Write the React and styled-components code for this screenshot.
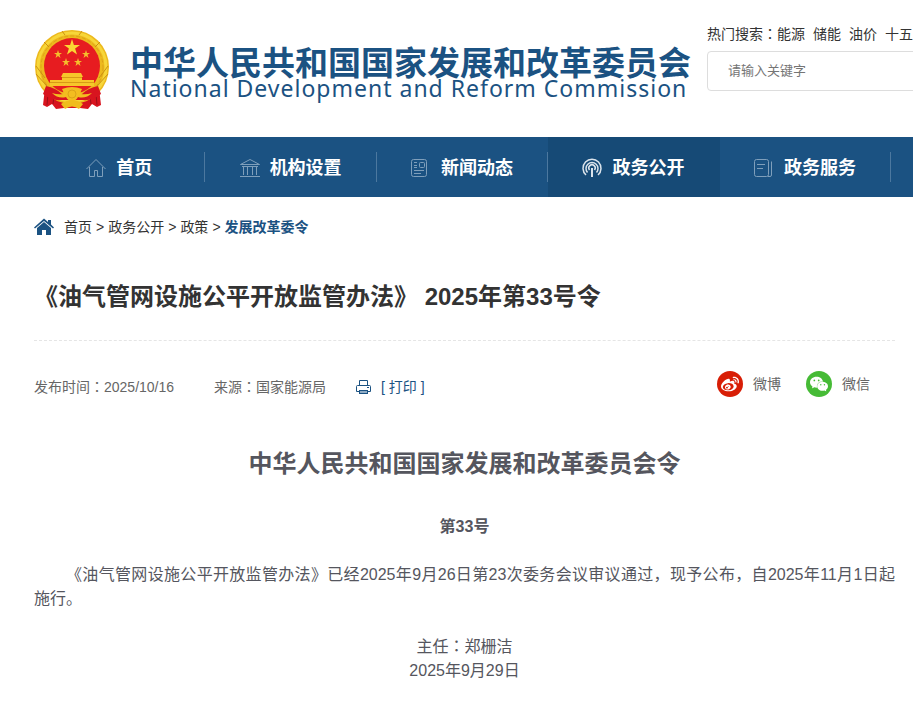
import styled, { createGlobalStyle } from "styled-components"
import { SiSinaweibo, SiWechat } from "react-icons/si";

const GlobalStyle = createGlobalStyle`
* {
    box-sizing: border-box;
}

body {
    margin: 0;
    background-color: #fff;
    color: #333;
    font-family: "Liberation Sans", "Noto Sans CJK SC", sans-serif;
    font-size: 14px;
    line-height: 20px;
    overflow-x: hidden;
}

a {
    color: inherit;
    text-decoration: none;
}

h1, h2, h3, p, ul, ol {
    margin: 0;
    padding: 0;
}

ul, ol {
    list-style: none;
}
`

const Header = styled.header`
display: flex;
align-items: flex-start;
padding: 24px 0 24px 34px;
min-height: 137px;
overflow: hidden;
`

const Brand = styled.a`
display: flex;
flex: none;
gap: 20px;
color: #1b5282;
padding-top: 4px;

svg {
    width: 76px;
    height: 84px;
}
`

const BrandText = styled.div`
display: flex;
flex-direction: column;
padding-top: 16px;
white-space: nowrap;
`

const BrandName = styled.span`
font-family: "Noto Sans CJK SC", sans-serif;
font-size: 33px;
line-height: 34px;
font-weight: 700;
`

const BrandEnglish = styled.span`
font-family: "Noto Sans", sans-serif;
font-size: 23px;
line-height: 20px;
letter-spacing: 1px;
`

const Search = styled.div`
flex: 1 0 206px;
min-width: 0;
margin-left: 16px;
`

const HotWords = styled.div`
display: flex;
gap: 8px;
white-space: nowrap;
`

// full-width colon sits in the middle of its box
const Colon = styled.span`
font-family: "Noto Sans CJK TC", sans-serif;
line-height: 1;
`

const SearchInput = styled.input`
display: block;
width: 120%;
height: 40px;
margin-top: 7px;
padding: 0 20px 2px;
border: 1px solid #ddd;
border-radius: 4px;
font: inherit;
font-size: 13px;

&::placeholder {
    color: #757575;
}
`

const Nav = styled.nav`
background-color: #1b5282;
padding-left: 34px;
overflow: hidden;
`

const NavList = styled.ul`
display: grid;
grid-template-columns: repeat(7, 1fr);
width: 1200px;
`

const NavItem = styled.li`
display: flex;
align-items: center;
height: 60px;
background-color: ${props => props.$active ? '#164a76' : 'transparent'};

&::after {
    content: "";
    width: 1px;
    height: 30px;
    background-color: ${props => props.$active ? 'transparent' : '#4c789f'};
}
`

const NavLink = styled.a`
display: flex;
flex: 1;
justify-content: center;
align-items: center;
gap: 10px;
padding-top: 1px;
color: #fff;
font-size: 18px;
font-weight: 700;

svg {
    width: 20px;
    height: 20px;
    fill: none;
    stroke: ${props => props.$active ? '#dbe4ec' : '#7f9fbb'};
}
`

const Container = styled.main`
padding: 20px 18px 24px 34px;
`

const Breadcrumb = styled.nav`
display: flex;
align-items: center;
gap: 10px;

svg {
    width: 20px;
    height: 18px;
}

ol {
    display: flex;
}

li + li::before {
    content: ">";
    padding: 0 4px;
}
`

const Current = styled.a`
color: #1b5282;
font-weight: 700;
`

const Title = styled.h1`
margin-top: 42px;
padding-bottom: 25px;
border-bottom: 1px dashed #e5e5e5;
font-size: 24px;
line-height: 36px;
`

const Meta = styled.div`
display: flex;
align-items: flex-end;
margin-top: 30px;
color: #666;
`

const Source = styled.span`
margin-left: 40px;
`

const PrintButton = styled.button`
display: flex;
align-items: center;
gap: 9px;
margin-left: 30px;
padding: 0;
border: 0;
background: none;
color: #1b5282;
font: inherit;

svg {
    width: 16px;
    height: 16px;
}
`

const Share = styled.div`
display: flex;
gap: 25px;
margin-left: auto;
padding-right: 25px;
`

const ShareLink = styled.a`
display: flex;
align-items: center;
gap: 10px;
`

const ShareIcon = styled.span`
display: flex;
align-items: center;
justify-content: center;
width: 26px;
height: 26px;
border-radius: 50%;
background-color: ${props => props.$color};
color: #fff;

svg {
    width: 18px;
    height: 18px;
}
`

const Article = styled.article`
padding-top: 49px;
color: #55565e;
font-size: 16px;
line-height: 24px;
text-align: center;

h2 {
    font-size: 24px;
    line-height: 36px;
}

h3 {
    margin: 33px 0 24px;
    font-size: 16px;
    line-height: 24px;
}
`

const Paragraph = styled.p`
text-align: justify;
text-indent: 32px;
`

const Signature = styled.p`
margin-top: 24px;
`

const Emblem = () => (
    <svg viewBox="0 0 76 84" aria-hidden="true">
        <path d="M11 60 L9 77 L13 79 L18 76 L22 81 L30 80 L46 80 L54 81 L58 76 L63 79 L67 77 L65 60 Z" fill="#d8141f" />
        <path d="M14 66 L13 77 M20 68 L19 76 M62 66 L63 77 M56 68 L57 76" stroke="#9c0f18" strokeWidth="1" />
        <circle cx="38" cy="39" r="37" fill="#edb91d" />
        <circle cx="38" cy="39" r="34" fill="none" stroke="#f7d63a" strokeWidth="3" />
        <circle cx="38" cy="39" r="31" fill="none" stroke="#dda318" strokeWidth="1" strokeDasharray="4 2" />
        <path d="M2 38 L11 50 M2 46 L13 58 M74 38 L65 50 M74 46 L63 58 M10 14 L15 19 M66 14 L61 19 M28 3 L31 7 M48 3 L45 7" stroke="#cb9114" />
        <circle cx="38" cy="38" r="28" fill="#e71c20" />
        <path d="M12 58 Q22 60 28 66 L48 66 Q54 60 64 58 L67 66 Q58 73 49 72 L27 72 Q18 73 9 66 Z" fill="#d8141f" />
        <path d="M38 11 L39.900 16.900 L46 16.900 L41.100 20.600 L43 26.500 L38 22.900 L33 26.500 L34.900 20.600 L30 16.900 L36.100 16.900 Z" fill="#fbd733" />
        <g fill="#f5bf2c">
            <path d="M24 22 L25 25 L28 25 L25.500 26.700 L26.500 30 L24 28 L21.500 30 L22.500 26.700 L20 25 L23 25 Z" />
            <path d="M52 22 L53 25 L56 25 L53.500 26.700 L54.500 30 L52 28 L49.500 30 L50.500 26.700 L48 25 L51 25 Z" />
            <path d="M32 30 L33 33 L36 33 L33.500 34.700 L34.500 38 L32 36 L29.500 38 L30.500 34.700 L28 33 L31 33 Z" />
            <path d="M44 30 L45 33 L48 33 L45.500 34.700 L46.500 38 L44 36 L41.500 38 L42.500 34.700 L40 33 L43 33 Z" />
        </g>
        <path d="M29 45 H47 L49 49 H27 Z M28 50 H48 V52 H60 V58 H16 V52 H28 Z" fill="#f7c62a" />
        <path d="M28 49.500 H48 M16 54.500 H60" stroke="#d79a16" strokeWidth="1" />
        <path d="M28 61 Q38 57 48 61 Q46 64 47 66 Q52 67 58 65 Q52 71 44 69 Q42 73 38 73 Q34 73 32 69 Q24 71 18 65 Q24 67 29 66 Q30 64 28 61 Z" fill="#f3bd20" />
        <circle cx="38" cy="66" r="4" fill="none" stroke="#dda318" strokeWidth="1" />
        <path d="M27 76 Q38 68 49 76 L45 81 Q38 76 31 81 Z" fill="#f0bd1c" />
    </svg>
)

const HouseIcon = () => (
    <svg viewBox="0 0 20 20">
        <path d="M.5 11 L10 1.500 L19.500 11 M3.500 9 V18.500 H8.500 V12.500 H11.500 V18.500 H16.500 V9" />
    </svg>
)

const BankIcon = () => (
    <svg viewBox="0 0 20 20">
        <path d="M.5 6.500 L10 1.500 L19.500 6.500 Z M2 8.500 H18 M3.500 8.500 V17 M7.500 8.500 V17 M12.500 8.500 V17 M16.500 8.500 V17 M0 18.500 H20" />
    </svg>
)

const NewsIcon = () => (
    <svg viewBox="0 0 20 20">
        <rect x=".5" y="1.500" width="15" height="17" rx="2" />
        <path d="M3 4.500 H6 M3 7.500 H6 M3 9.500 H6 M3 12.500 H13 M3 15.500 H10" />
        <rect x="8.500" y="4.500" width="5" height="5" rx="1" />
    </svg>
)

const SignalIcon = () => (
    <svg viewBox="0 0 20 20">
        <path d="M4 17 A9 9 0 1 1 16 17 M5.500 14.500 A6 6 0 1 1 14.500 14.500 M7.500 12 A3.200 3.200 0 1 1 12.500 12" strokeWidth="1.500" />
        <path d="M10 10 V19" strokeWidth="2" />
    </svg>
)

const ServiceIcon = () => (
    <svg viewBox="0 0 20 20">
        <rect x=".5" y="1.500" width="14" height="17" rx="2" />
        <path d="M3 6.500 H11 M3 10.500 H9 M14 18.500 H16 Q17.500 18.500 17.500 17 V3.500" />
    </svg>
)

const CrumbIcon = () => (
    <svg viewBox="0 0 20 18" fill="#1b5282" aria-hidden="true">
        <path d="M10 .5 L14 4 V2 H17 V6.500 L20 9.500 L19 10.500 L10 3 L1 10.500 L0 9.500 Z" />
        <path d="M10 4 L17 10 V17 H12 V12 H8 V17 H3 V10 Z" />
    </svg>
)

const PrinterIcon = () => (
    <svg viewBox="0 0 16 16" fill="none" stroke="#1b5282" aria-hidden="true">
        <path d="M3.500 6 V1.500 H11.500 V6 M3 12.500 H.5 V7.500 Q.5 6.500 1.500 6.500 H13.500 Q14.500 6.500 14.500 7.500 V12.500 H12" />
        <rect x="3.500" y="11.500" width="8" height="3" fill="#8fabc4" />
        <path d="M11 8.500 H13" />
    </svg>
)

const navItems = [
    { name: "首页", icon: <HouseIcon /> },
    { name: "机构设置", icon: <BankIcon /> },
    { name: "新闻动态", icon: <NewsIcon /> },
    { name: "政务公开", icon: <SignalIcon />, active: true },
    { name: "政务服务", icon: <ServiceIcon /> }
];

const App = () => {
    return (
        <>
            <GlobalStyle />
            <Header>
                <Brand href="#">
                    <Emblem />
                    <BrandText>
                        <BrandName>中华人民共和国国家发展和改革委员会</BrandName>
                        <BrandEnglish>National Development and Reform Commission</BrandEnglish>
                    </BrandText>
                </Brand>
                <Search>
                    <HotWords>
                        <span>热门搜索<Colon>：</Colon><a href="#">能源</a></span>
                        <a href="#">储能</a>
                        <a href="#">油价</a>
                        <a href="#">十五</a>
                    </HotWords>
                    <SearchInput type="text" placeholder="请输入关键字" aria-label="请输入关键字" />
                </Search>
            </Header>

            <Nav>
                <NavList>
                    {navItems.map(item => (
                        <NavItem key={item.name} $active={item.active}>
                            <NavLink href="#" $active={item.active}>
                                {item.icon}
                                {item.name}
                            </NavLink>
                        </NavItem>
                    ))}
                </NavList>
            </Nav>

            <Container>
                <Breadcrumb>
                    <CrumbIcon />
                    <ol>
                        <li><a href="#">首页</a></li>
                        <li><a href="#">政务公开</a></li>
                        <li><a href="#">政策</a></li>
                        <li><Current href="#">发展改革委令</Current></li>
                    </ol>
                </Breadcrumb>

                <Title>《油气管网设施公平开放监管办法》 2025年第33号令</Title>

                <Meta>
                    <span>发布时间<Colon>：</Colon>2025/10/16</span>
                    <Source>来源<Colon>：</Colon>国家能源局</Source>
                    <PrintButton type="button">
                        <PrinterIcon />
                        [ 打印 ]
                    </PrintButton>
                    <Share>
                        <ShareLink href="#">
                            <ShareIcon $color="#d81e06"><SiSinaweibo /></ShareIcon>
                            微博
                        </ShareLink>
                        <ShareLink href="#">
                            <ShareIcon $color="#46bb36"><SiWechat /></ShareIcon>
                            微信
                        </ShareLink>
                    </Share>
                </Meta>

                <Article>
                    <h2>中华人民共和国国家发展和改革委员会令</h2>
                    <h3>第33号</h3>
                    <Paragraph>
                        《油气管网设施公平开放监管办法》已经2025年9月26日第23次委务会议审议通过，现予公布，自2025年11月1日起施行。
                    </Paragraph>
                    <Signature>
                        主任<Colon>：</Colon>郑栅洁<br />
                        2025年9月29日
                    </Signature>
                </Article>
            </Container>
        </>
    )
}

export default App
